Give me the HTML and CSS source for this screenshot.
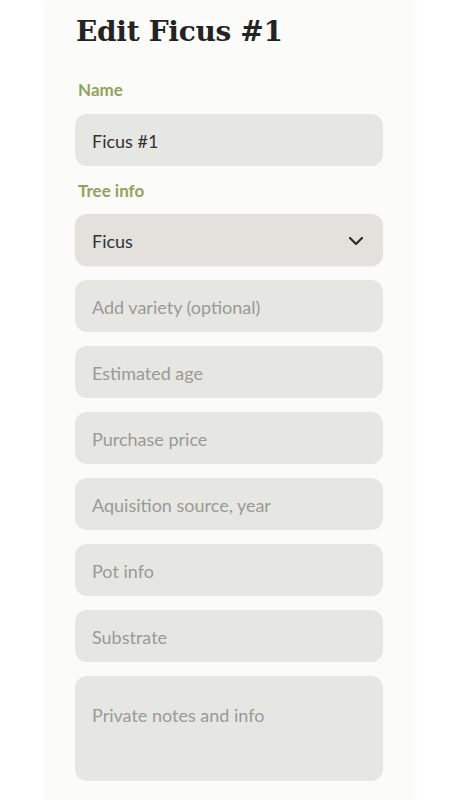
FILE: index.html
```html
<!DOCTYPE html>
<html>
<head>
<meta charset="utf-8">
<link rel="stylesheet" href="styles.css">
</head>
<body>
<div class="panel">
  <h1 class="title">Edit Ficus #1</h1>
  <div class="label label-first">Name</div>
  <div class="field"><span class="value">Ficus #1</span></div>
  <div class="label">Tree info</div>
  <div class="stack">
    <div class="field select"><span class="value">Ficus</span>
      <svg class="chev" width="16" height="10" viewBox="0 0 16 10"><path d="M2 2 L8 8 L14 2" fill="none" stroke="#2a2a2a" stroke-width="2.2" stroke-linecap="round" stroke-linejoin="round"/></svg>
    </div>
    <div class="field"><span class="ph">Add variety (optional)</span></div>
    <div class="field"><span class="ph">Estimated age</span></div>
    <div class="field"><span class="ph">Purchase price</span></div>
    <div class="field"><span class="ph">Aquisition source, year</span></div>
    <div class="field"><span class="ph">Pot info</span></div>
    <div class="field"><span class="ph">Substrate</span></div>
    <div class="field area"><span class="ph">Private notes and info</span></div>
  </div>
</div>
</body>
</html>
```
FILE: styles.css
```css
html, body {
  margin: 0;
  padding: 0;
  background: #ffffff;
  height: 800px;
  overflow: hidden;
}
.panel {
  margin-left: 48px;
  width: 362px;
  height: 820px;
  box-sizing: border-box;
  background: #fbfbf9;
  box-shadow: 0 0 12px rgba(0,0,0,0.05);
  padding: 12px 27px 0 27px;
  font-family: Lato, "Noto Sans", sans-serif;
}
.title {
  margin: 0 0 0 1px;
  font-family: "DejaVu Serif", serif;
  font-weight: bold;
  font-size: 28px;
  line-height: 40px;
  color: #232323;
  letter-spacing: -0.3px;
}
.label {
  color: #8fa35c;
  font-weight: bold;
  font-size: 17px;
  line-height: 22px;
  margin: 14px 0 12px 3px;
}
.label-first {
  margin-top: 27px;
  margin-bottom: 13px;
}
.stack {
  display: flex;
  flex-direction: column;
  gap: 14px;
}
.field {
  height: 52px;
  box-sizing: border-box;
  border-radius: 12px;
  background: #e6e6e2;
  display: flex;
  align-items: center;
  padding: 2px 18px 0 17px;
  font-size: 18px;
}
.select {
  background: #e2e1dc;
  justify-content: space-between;
  box-shadow: 0 1px 2px rgba(0,0,0,0.05);
}
.chev {
  margin-right: 1px;
}
.value {
  color: #333333;
}
.ph {
  color: #9a9a96;
}
.area {
  height: 105px;
  align-items: flex-start;
  padding-top: 28px;
}
```
